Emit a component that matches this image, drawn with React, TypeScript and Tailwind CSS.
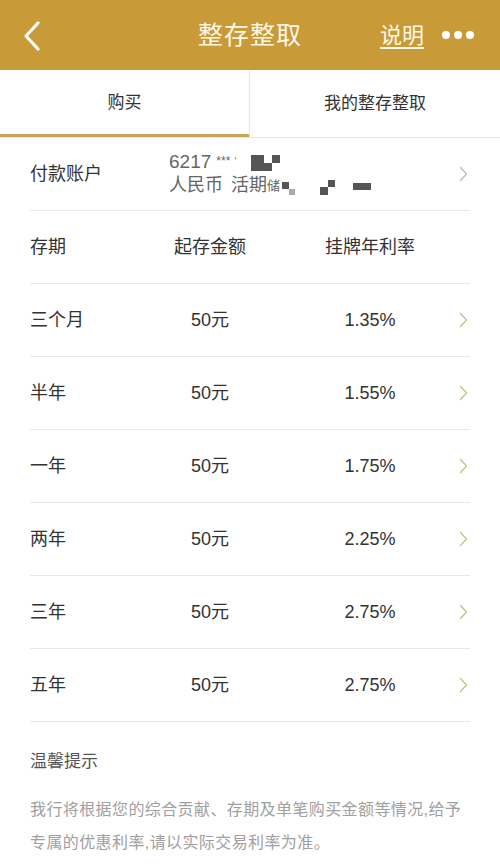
import React from 'react';

const rows = [
  { term: '三个月', amount: '50元', rate: '1.35%' },
  { term: '半年', amount: '50元', rate: '1.55%' },
  { term: '一年', amount: '50元', rate: '1.75%' },
  { term: '两年', amount: '50元', rate: '2.25%' },
  { term: '三年', amount: '50元', rate: '2.75%' },
  { term: '五年', amount: '50元', rate: '2.75%' },
];

function Chevron({ className }: { className?: string }) {
  return (
    <svg width="9" height="16" viewBox="0 0 9 16" fill="none" className={className}>
      <path d="M1.5 1.5 L7.5 8 L1.5 14.5" stroke="currentColor" strokeWidth="1.3" strokeLinecap="round" strokeLinejoin="round" />
    </svg>
  );
}

export default function App() {
  return (
    <div
      className="w-[500px] h-[866px] bg-white overflow-hidden"
      style={{ fontFamily: '"Liberation Sans", "Noto Sans CJK SC", sans-serif' }}
    >
      {/* Title bar */}
      <div className="h-[70px] bg-[#c99a38] flex items-center px-[20px] relative">
        <svg width="20" height="32" viewBox="0 0 20 32" fill="none" className="ml-[2px] mt-[2px]">
          <path d="M16 3 L4 16 L16 29" stroke="white" strokeWidth="3.2" strokeLinecap="round" strokeLinejoin="round" />
        </svg>
        <div className="absolute left-0 right-0 top-0 h-[70px] flex items-center justify-center pointer-events-none">
          <span className="text-[25px] text-[#fff8e6] tracking-[1px] mt-[1px]">整存整取</span>
        </div>
        <div className="ml-auto flex items-center gap-[18px]">
          <span className="text-[22px] text-[#fff8e6] underline underline-offset-[4px] decoration-[1.5px]">说明</span>
          <div className="flex gap-[4px] mr-[6px]">
            <span className="w-[8px] h-[8px] rounded-full bg-white" />
            <span className="w-[8px] h-[8px] rounded-full bg-white" />
            <span className="w-[8px] h-[8px] rounded-full bg-white" />
          </div>
        </div>
      </div>

      {/* Tabs */}
      <div className="flex h-[67px] mt-[1px] border-b border-[#e6e6e6]">
        <div className="w-[249px] flex items-center justify-center border-b-[3px] border-[#c8a45c] text-[17px] text-[#333]">
          购买
        </div>
        <div className="w-px bg-[#e4e4e4]" />
        <div className="flex-1 flex items-center justify-center text-[17px] text-[#333]">
          我的整存整取
        </div>
      </div>

      <div className="px-[30px]">
        {/* Account */}
        <div className="h-[73px] flex items-center border-b border-[#e8e8e8]">
          <span className="w-[139px] text-[18px] text-[#333]">付款账户</span>
          <div className="flex-1 flex flex-col text-[18px] leading-[23px] text-[#666] -mt-[2px]">
            <div className="flex items-center">
              <span><span className="text-[19px]">6217</span> <span className="text-[12px] align-top">***</span></span>
              <span className="ml-[4px] text-[10px]">‘</span>
              <div className="ml-[14px] flex items-start">
                <span className="w-[13px] h-[16px] bg-[#555] mt-[3px]" />
                <span className="w-[8px] h-[8px] bg-[#555] mt-[11px]" />
                <span className="w-[8px] h-[8px] bg-[#555] mt-[3px]" />
              </div>
            </div>
            <div className="flex items-center">
              <span>人民币</span>
              <span className="ml-[8px]">活期</span>
              <span className="text-[13px]">储</span>
              <div className="ml-[2px] flex items-start mt-[6px]">
                <span className="w-[7px] h-[7px] bg-[#555]" />
                <span className="w-[6px] h-[6px] bg-[#aaa] mt-[7px]" />
              </div>
              <div className="ml-[25px] flex items-start mt-[4px]">
                <span className="w-[8px] h-[8px] bg-[#555] mt-[7px]" />
                <span className="w-[7px] h-[7px] bg-[#555]" />
              </div>
              <span className="ml-[18px] w-[18px] h-[7px] bg-[#555] mt-[2px]" />
            </div>
          </div>
          <Chevron className="text-[#bbbbbb] mr-[2px]" />
        </div>

        {/* Column headers */}
        <div className="h-[73px] flex items-center border-b border-[#e8e8e8] text-[18px] text-[#333]">
          <span className="w-[100px]">存期</span>
          <span className="w-[160px] text-center">起存金额</span>
          <span className="w-[160px] text-center">挂牌年利率</span>
        </div>

        {/* Rate rows */}
        {rows.map((r) => (
          <div key={r.term} className="h-[73px] flex items-center border-b border-[#e8e8e8] text-[18px] text-[#333]">
            <span className="w-[100px]">{r.term}</span>
            <span className="w-[160px] text-center">{r.amount}</span>
            <span className="w-[160px] text-center">{r.rate}</span>
            <Chevron className="ml-auto mr-[2px] text-[#cdbb8a]" />
          </div>
        ))}

        {/* Tips */}
        <div className="pt-[27px] text-[17px] text-[#555]">温馨提示</div>
        <p className="mt-[18px] text-[16px] tracking-[0.4px] leading-[33px] text-[#a0a0a0]">
          我行将根据您的综合贡献、存期及单笔购买金额等情况,给予专属的优惠利率,请以实际交易利率为准。
        </p>
      </div>
    </div>
  );
}
